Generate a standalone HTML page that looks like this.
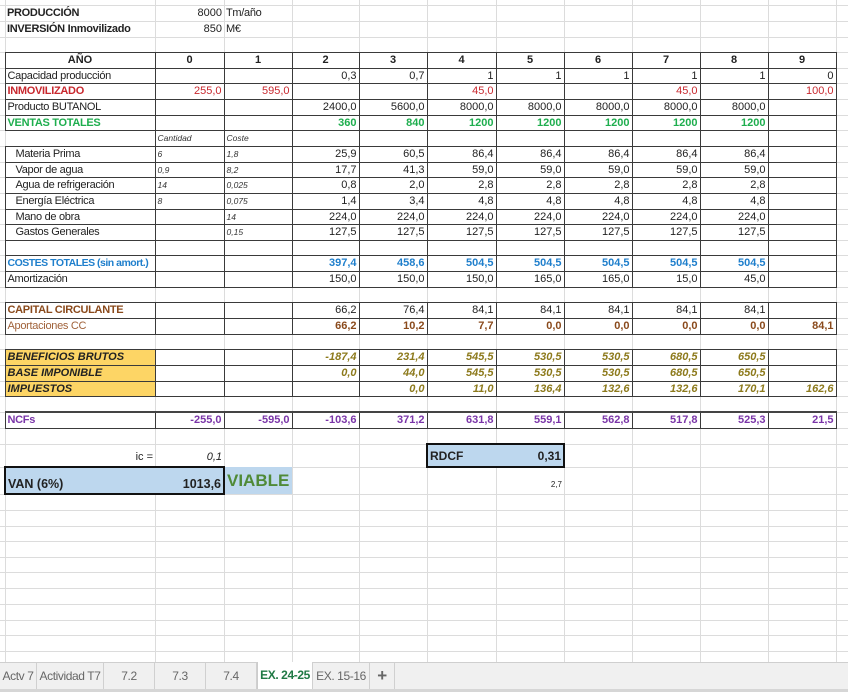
<!DOCTYPE html>
<html><head><meta charset="utf-8">
<style>
*{margin:0;padding:0;box-sizing:border-box}
body{width:848px;height:692px;overflow:hidden;background:#fff;position:relative;font-family:"Liberation Sans",sans-serif;font-size:11px;color:#222}
.gl{position:absolute;background:#dcdcdc}
table{position:absolute;left:0;top:0;border-collapse:collapse;table-layout:fixed;width:848px}
td{padding:0 2px;white-space:nowrap;overflow:hidden;line-height:12px;vertical-align:middle;text-align:right}
tr.k td{border:1px solid #3a3a3a}
tr.k td.x,tr.k td.z{border:none}
td.l{text-align:left;letter-spacing:-0.3px}
td.c{text-align:center}
.bo{font-weight:bold}
.it{font-style:italic}
.in{padding-left:10px}
.red{color:#c8282e}
.grn{color:#1eae4e;font-weight:bold}
.blu{color:#1f7fcc;font-weight:bold}
.brn{color:#8a4a1c;font-weight:bold}
.brl{color:#a0623a}
.gold{color:#8d7a1c;font-weight:bold;font-style:italic}
.pur{color:#7a35a8;font-weight:bold}
.y{background:#fdd565;font-weight:bold;font-style:italic;color:#222;text-align:left}
.sm{font-size:8.5px;font-style:italic;text-align:left;color:#333}
.tabs{position:absolute;left:0;top:662px;width:848px;height:30px;background:#f0f0f0;border-top:1px solid #cfcfcf;border-bottom:3px solid #d6d6d6;font-size:12px;color:#666;letter-spacing:-0.4px}
.tab{position:absolute;top:0;height:26px;line-height:26px;text-align:center;border-right:1px solid #d0d0d0;white-space:nowrap;overflow:hidden}
.act{background:#fff;color:#207a45;font-weight:bold;top:-1px;height:27px;border-left:1px solid #ccc}
</style></head><body>
<div id="g"></div>
<table>
<colgroup><col style="width:5px"><col style="width:150px"><col style="width:69px"><col style="width:68px"><col style="width:67px"><col style="width:68px"><col style="width:69px"><col style="width:68px"><col style="width:68px"><col style="width:68px"><col style="width:68px"><col style="width:68px"><col style="width:12px"></colgroup>
<tr style="height:5px"><td colspan="13"></td></tr>
<tr style="height:16px"><td class="x"></td><td class="l bo">PRODUCCIÓN</td><td>8000</td><td class="l">Tm/año</td><td colspan="9"></td></tr>
<tr style="height:16px"><td class="x"></td><td class="l bo">INVERSIÓN Inmovilizado</td><td>850</td><td class="l">M€</td><td colspan="9"></td></tr>
<tr style="height:15px"><td colspan="13"></td></tr>
<tr class="k bo" style="height:16px"><td class="x"></td><td class="c">AÑO</td><td class="c">0</td><td class="c">1</td><td class="c">2</td><td class="c">3</td><td class="c">4</td><td class="c">5</td><td class="c">6</td><td class="c">7</td><td class="c">8</td><td class="c">9</td><td class="z"></td></tr>
<tr class="k" style="height:15px"><td class="x"></td><td class="l">Capacidad producción</td><td></td><td></td><td>0,3</td><td>0,7</td><td>1</td><td>1</td><td>1</td><td>1</td><td>1</td><td>0</td><td class="z"></td></tr>
<tr class="k red" style="height:16px"><td class="x"></td><td class="l bo">INMOVILIZADO</td><td>255,0</td><td>595,0</td><td></td><td></td><td>45,0</td><td></td><td></td><td>45,0</td><td></td><td>100,0</td><td class="z"></td></tr>
<tr class="k" style="height:16px"><td class="x"></td><td class="l">Producto BUTANOL</td><td></td><td></td><td>2400,0</td><td>5600,0</td><td>8000,0</td><td>8000,0</td><td>8000,0</td><td>8000,0</td><td>8000,0</td><td></td><td class="z"></td></tr>
<tr class="k grn" style="height:15px"><td class="x"></td><td class="l">VENTAS TOTALES</td><td></td><td></td><td>360</td><td>840</td><td>1200</td><td>1200</td><td>1200</td><td>1200</td><td>1200</td><td></td><td class="z"></td></tr>
<tr class="k" style="height:16px"><td class="x"></td><td class="l" style="border:none;border-top:1px solid #3a3a3a"></td><td class="sm">Cantidad</td><td class="sm">Coste</td><td></td><td></td><td></td><td></td><td></td><td></td><td></td><td></td><td class="z"></td></tr>
<tr class="k" style="height:16px"><td class="x"></td><td class="l in">Materia Prima</td><td class="sm">6</td><td class="sm">1,8</td><td>25,9</td><td>60,5</td><td>86,4</td><td>86,4</td><td>86,4</td><td>86,4</td><td>86,4</td><td></td><td class="z"></td></tr>
<tr class="k" style="height:15px"><td class="x"></td><td class="l in">Vapor de agua</td><td class="sm">0,9</td><td class="sm">8,2</td><td>17,7</td><td>41,3</td><td>59,0</td><td>59,0</td><td>59,0</td><td>59,0</td><td>59,0</td><td></td><td class="z"></td></tr>
<tr class="k" style="height:16px"><td class="x"></td><td class="l in">Agua de refrigeración</td><td class="sm">14</td><td class="sm">0,025</td><td>0,8</td><td>2,0</td><td>2,8</td><td>2,8</td><td>2,8</td><td>2,8</td><td>2,8</td><td></td><td class="z"></td></tr>
<tr class="k" style="height:16px"><td class="x"></td><td class="l in">Energía Eléctrica</td><td class="sm">8</td><td class="sm">0,075</td><td>1,4</td><td>3,4</td><td>4,8</td><td>4,8</td><td>4,8</td><td>4,8</td><td>4,8</td><td></td><td class="z"></td></tr>
<tr class="k" style="height:15px"><td class="x"></td><td class="l in">Mano de obra</td><td></td><td class="sm">14</td><td>224,0</td><td>224,0</td><td>224,0</td><td>224,0</td><td>224,0</td><td>224,0</td><td>224,0</td><td></td><td class="z"></td></tr>
<tr class="k" style="height:16px"><td class="x"></td><td class="l in">Gastos Generales</td><td></td><td class="sm">0,15</td><td>127,5</td><td>127,5</td><td>127,5</td><td>127,5</td><td>127,5</td><td>127,5</td><td>127,5</td><td></td><td class="z"></td></tr>
<tr class="k" style="height:15px"><td class="x"></td><td></td><td></td><td></td><td></td><td></td><td></td><td></td><td></td><td></td><td></td><td></td><td class="z"></td></tr>
<tr class="k blu" style="height:16px"><td class="x"></td><td class="l" style="font-size:10.5px;letter-spacing:-0.5px">COSTES TOTALES (sin amort.)</td><td></td><td></td><td>397,4</td><td>458,6</td><td>504,5</td><td>504,5</td><td>504,5</td><td>504,5</td><td>504,5</td><td></td><td class="z"></td></tr>
<tr class="k" style="height:16px"><td class="x"></td><td class="l">Amortización</td><td></td><td></td><td>150,0</td><td>150,0</td><td>150,0</td><td>165,0</td><td>165,0</td><td>15,0</td><td>45,0</td><td></td><td class="z"></td></tr>
<tr style="height:15px"><td colspan="13"></td></tr>
<tr class="k" style="height:16px"><td class="x"></td><td class="l brn">CAPITAL CIRCULANTE</td><td></td><td></td><td>66,2</td><td>76,4</td><td>84,1</td><td>84,1</td><td>84,1</td><td>84,1</td><td>84,1</td><td></td><td class="z"></td></tr>
<tr class="k brn" style="height:16px"><td class="x"></td><td class="l brl" style="font-weight:normal">Aportaciones CC</td><td></td><td></td><td>66,2</td><td>10,2</td><td>7,7</td><td>0,0</td><td>0,0</td><td>0,0</td><td>0,0</td><td>84,1</td><td class="z"></td></tr>
<tr style="height:15px"><td colspan="13"></td></tr>
<tr class="k gold" style="height:16px"><td class="x"></td><td class="y">BENEFICIOS BRUTOS</td><td></td><td></td><td>-187,4</td><td>231,4</td><td>545,5</td><td>530,5</td><td>530,5</td><td>680,5</td><td>650,5</td><td></td><td class="z"></td></tr>
<tr class="k gold" style="height:16px"><td class="x"></td><td class="y">BASE IMPONIBLE</td><td></td><td></td><td>0,0</td><td>44,0</td><td>545,5</td><td>530,5</td><td>530,5</td><td>680,5</td><td>650,5</td><td></td><td class="z"></td></tr>
<tr class="k gold" style="height:15px"><td class="x"></td><td class="y">IMPUESTOS</td><td></td><td></td><td></td><td>0,0</td><td>11,0</td><td>136,4</td><td>132,6</td><td>132,6</td><td>170,1</td><td>162,6</td><td class="z"></td></tr>
<tr style="height:16px"><td colspan="13"></td></tr>
<tr class="k pur" style="height:16px"><td class="x"></td><td class="l" style="border-top:2px solid #444">NCFs</td><td style="border-top:2px solid #444">-255,0</td><td style="border-top:2px solid #444">-595,0</td><td style="border-top:2px solid #444">-103,6</td><td style="border-top:2px solid #444">371,2</td><td style="border-top:2px solid #444">631,8</td><td style="border-top:2px solid #444">559,1</td><td style="border-top:2px solid #444">562,8</td><td style="border-top:2px solid #444">517,8</td><td style="border-top:2px solid #444">525,3</td><td style="border-top:2px solid #444">21,5</td><td class="z"></td></tr>
<tr style="height:16px"><td colspan="13"></td></tr>
<tr style="height:23px"><td></td><td style="vertical-align:bottom;padding-bottom:3px">ic =</td><td class="it" style="vertical-align:bottom;padding-bottom:3px">0,1</td><td></td><td></td><td></td><td colspan="2" style="background:#bdd7ee;border:2px solid #111;font-weight:bold;font-size:12px"><span style="float:left">RDCF</span>0,31</td><td colspan="5"></td></tr>
<tr style="height:27px"><td></td><td colspan="2" style="background:#bdd7ee;border:2px solid #111;font-weight:bold;font-size:12.5px;vertical-align:bottom;padding-bottom:3px"><span style="float:left">VAN (6%)</span>1013,6</td><td class="l" style="background:#bdd7ee;color:#4f8a37;font-weight:bold;font-size:17px;letter-spacing:0">VIABLE</td><td></td><td></td><td></td><td style="font-size:8px;vertical-align:bottom;padding-bottom:3px">2,7</td><td colspan="5"></td></tr>
</table>
<div class="tabs">
<div class="tab" style="left:0;width:37px">Actv 7</div>
<div class="tab" style="left:37px;width:67px">Actividad T7</div>
<div class="tab" style="left:104px;width:51px">7.2</div>
<div class="tab" style="left:155px;width:51px">7.3</div>
<div class="tab" style="left:206px;width:51px">7.4</div>
<div class="tab act" style="left:257px;width:56px">EX. 24-25</div>
<div class="tab" style="left:313px;width:57px">EX. 15-16</div>
<div class="tab" style="left:370px;width:25px;font-size:17px;font-weight:bold">+</div>
</div>
<script>
var g=document.getElementById('g'),h='';
[5,155,224,292,359,427,496,564,632,700,768,836].forEach(function(x){h+='<div class="gl" style="left:'+x+'px;top:0;width:1px;height:662px"></div>';});
[5,21,37,52,68,83,99,115,130,146,162,177,193,209,224,240,255,271,287,302,318,334,349,365,381,396,412,428,444,467,494,510,526,541,557,572,588,604,620,635,651].forEach(function(y){h+='<div class="gl" style="left:0;top:'+y+'px;width:848px;height:1px"></div>';});
g.innerHTML=h;
</script>
</body></html>
